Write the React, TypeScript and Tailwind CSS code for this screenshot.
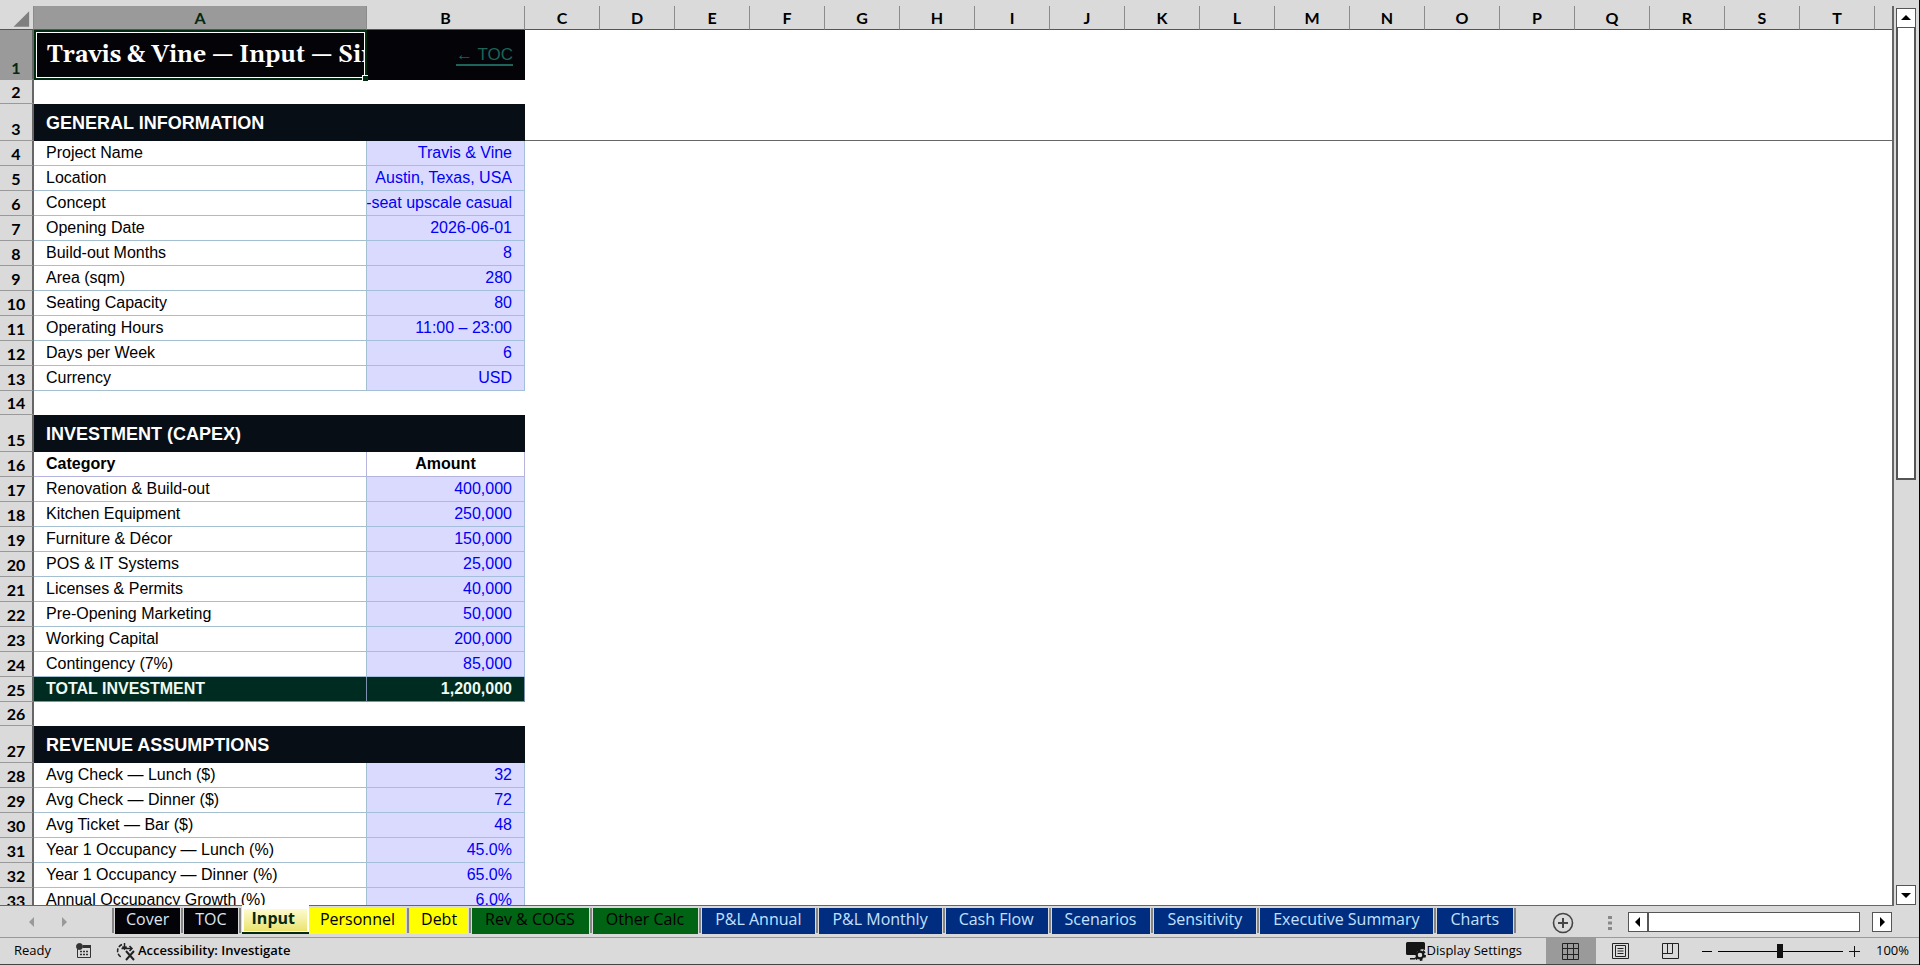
import React from "react";

type Kind = "title" | "blank" | "section" | "data" | "columns" | "total";
type Row = { kind: Kind; label?: string; value?: string };

const d = (label: string, value: string): Row => ({ kind: "data", label, value });

const rows: Row[] = [
  { kind: "title", label: "Travis & Vine — Input — Single Source of Truth", value: "← TOC" },
  { kind: "blank" },
  { kind: "section", label: "GENERAL INFORMATION" },
  d("Project Name", "Travis & Vine"),
  d("Location", "Austin, Texas, USA"),
  d("Concept", "80-seat upscale casual"),
  d("Opening Date", "2026-06-01"),
  d("Build-out Months", "8"),
  d("Area (sqm)", "280"),
  d("Seating Capacity", "80"),
  d("Operating Hours", "11:00 – 23:00"),
  d("Days per Week", "6"),
  d("Currency", "USD"),
  { kind: "blank" },
  { kind: "section", label: "INVESTMENT (CAPEX)" },
  { kind: "columns", label: "Category", value: "Amount" },
  d("Renovation & Build-out", "400,000"),
  d("Kitchen Equipment", "250,000"),
  d("Furniture & Décor", "150,000"),
  d("POS & IT Systems", "25,000"),
  d("Licenses & Permits", "40,000"),
  d("Pre-Opening Marketing", "50,000"),
  d("Working Capital", "200,000"),
  d("Contingency (7%)", "85,000"),
  { kind: "total", label: "TOTAL INVESTMENT", value: "1,200,000" },
  { kind: "blank" },
  { kind: "section", label: "REVENUE ASSUMPTIONS" },
  d("Avg Check — Lunch ($)", "32"),
  d("Avg Check — Dinner ($)", "72"),
  d("Avg Ticket — Bar ($)", "48"),
  d("Year 1 Occupancy — Lunch (%)", "45.0%"),
  d("Year 1 Occupancy — Dinner (%)", "65.0%"),
  d("Annual Occupancy Growth (%)", "6.0%"),
];

const letters = "CDEFGHIJKLMNOPQRST".split("");

const heights: Record<Kind, string> = {
  title: "h-[50px]",
  blank: "h-[24px]",
  section: "h-[37px]",
  data: "h-[25px]",
  columns: "h-[25px]",
  total: "h-[25px]",
};

const labelStyles: Record<Kind, string> = {
  title: "",
  blank: "",
  section: "",
  data: "border-b border-r border-[#a3bfd0] text-black",
  columns: "border-b border-r border-[#b4b4dc] font-bold text-black",
  total: "border-b border-r border-[#7f8fb0] bg-[#002b20] font-bold text-[#eefaf4]",
};

const valueStyles: Record<Kind, string> = {
  title: "",
  blank: "",
  section: "",
  data: "border-b border-r border-[#a3bfdb] bg-[#dadaff] text-right text-[#0000f5]",
  columns: "border-b border-r border-[#b4b4dc] text-center font-bold text-black",
  total: "border-b border-r border-[#7f8fb0] bg-[#002b20] text-right font-bold text-[#eefaf4]",
};

function RowCells({ row }: { row: Row }) {
  if (row.kind === "title") {
    return (
      <>
        <td className="bg-[#030308] p-0">
          <div className="relative flex h-[50px] items-center border-2 border-[#002b10] bg-[#030308]">
            <div className="flex h-full w-full items-center overflow-hidden border border-white pt-0.5 pl-2.5 font-['Gelasio','Georgia','Liberation_Serif',serif] text-[23px] font-bold whitespace-nowrap text-white">
              {row.label}
            </div>
            <span className="absolute -right-[3px] -bottom-[3px] size-[6px] border-t border-l border-white bg-[#002b10]" />
          </div>
        </td>
        <td className="bg-[#030308] px-3 py-0 text-right text-[17px]">
          <a href="#toc" className="text-[#1d6358] underline decoration-2 underline-offset-4">{row.value}</a>
        </td>
      </>
    );
  }
  if (row.kind === "section") {
    return (
      <td colSpan={2} className="bg-[#070e16] px-3 py-0 text-left text-lg leading-5 font-bold text-white">
        {row.label}
      </td>
    );
  }
  if (row.kind === "blank") return <td colSpan={2} className="p-0" />;
  return (
    <>
      <td className={`overflow-hidden px-3 py-0 whitespace-nowrap ${labelStyles[row.kind]}`}>{row.label}</td>
      <td className={`py-0 ${row.kind === "columns" ? "px-0" : "pr-3 pl-0"} ${valueStyles[row.kind]}`}>
        <div className={`flex overflow-hidden whitespace-nowrap ${row.kind === "columns" ? "justify-center" : "justify-end"}`}>{row.value}</div>
      </td>
    </>
  );
}

function Sheet() {
  const head = "border-r border-b border-r-[#8c8c8c] border-b-[#555] p-0 leading-5 font-bold";
  return (
    <div className="min-h-0 min-w-0 flex-1 overflow-hidden border-r-2 border-b border-[#666]">
      <table className="w-full table-fixed border-separate border-spacing-0 font-['Liberation_Sans',Arial,sans-serif] text-base leading-5">
        <colgroup>
          <col className="w-[34px]" />
          <col className="w-[333px]" />
          <col className="w-[158px]" />
          {letters.map((l) => (
            <col key={l} className="w-[75px]" />
          ))}
          <col />
        </colgroup>
        <thead className="bg-[#dadada] font-['Lato',sans-serif] text-black">
          <tr className="h-[24px]">
            <th className={head} aria-label="Select all">
              <svg viewBox="0 0 34 20" className="block h-5 w-[33px]"><path d="M30 3v16H14z" fill="#7f7f7f" /></svg>
            </th>
            <th className={`${head} bg-[#9a9a9a] text-[#06280f]`}>A</th>
            <th className={head}>B</th>
            {letters.map((l) => (
              <th key={l} className={head}>{l}</th>
            ))}
            <th className="border-b border-[#555] p-0" />
          </tr>
        </thead>
        <tbody className="bg-white">
          {rows.map((row, i) => (
            <tr key={i} className={heights[row.kind]}>
              <th
                className={`border-r-2 border-b border-r-[#666] border-b-[#999] px-0 pt-0 pb-px align-bottom font-['Lato',sans-serif] font-bold ${
                  i === 0 ? "bg-[#9a9a9a] text-[#06280f]" : "bg-[#dadada] text-black"
                }`}
              >
                {i + 1}
              </th>
              <RowCells row={row} />
              <td colSpan={19} className={`p-0 ${i === 2 ? "border-b border-[#666]" : ""}`} />
            </tr>
          ))}
        </tbody>
      </table>
    </div>
  );
}

const tabs: { name: string; style: string }[] = [
  { name: "Cover", style: "bg-[#030308] px-[11px] text-[#dfe6ee]" },
  { name: "TOC", style: "bg-[#030308] px-[11px] text-[#dfe6ee]" },
  { name: "Input", style: "" },
  { name: "Personnel", style: "bg-[#ffff00] px-[11px] font-medium text-black" },
  { name: "Debt", style: "bg-[#ffff00] px-[11px] font-medium text-black" },
  { name: "Rev & COGS", style: "bg-[#006414] pr-3.5 pl-[13px] text-black" },
  { name: "Other Calc", style: "bg-[#006414] pr-3.5 pl-[13px] text-black" },
  ...["P&L Annual", "P&L Monthly", "Cash Flow", "Scenarios", "Sensitivity", "Executive Summary", "Charts"].map((name) => ({
    name,
    style: "bg-[#002d80] pr-3.5 pl-[13px] text-[#c4e2ff]",
  })),
];

function Arrow({ dir, color = "#000" }: { dir: "up" | "down" | "left" | "right"; color?: string }) {
  const p = { up: "M1 8l5-5 5 5z", down: "M1 4l5 5 5-5z", left: "M8 1L3 6l5 5z", right: "M4 1l5 5-5 5z" }[dir];
  return (
    <svg viewBox="0 0 12 12" className="size-3">
      <path d={p} fill={color} />
    </svg>
  );
}

function Divider() {
  return <span className="mx-px h-[25px] w-0.5 bg-[#858585]" />;
}

function TabBar() {
  return (
    <div className="flex h-8 shrink-0 items-start border-b border-[#999] pr-[27px] text-base">
      <div className="flex w-[111px] shrink-0 items-center gap-5 pt-2.5 pl-[26px]">
        <button aria-label="Previous sheets" className="flex"><Arrow dir="left" color="#999" /></button>
        <button aria-label="Next sheets" className="flex"><Arrow dir="right" color="#999" /></button>
      </div>
      <nav className="flex">
        <div className="flex pt-0.5"><Divider /></div>
        {tabs.map((t) =>
          t.name === "Input" ? (
            <button key={t.name} className="-mt-px flex h-[29px] border-b-2 border-[#002b10] bg-white px-0.5 pt-1 pb-px font-bold text-[#06280f]">
              <span className="flex h-full items-center bg-linear-to-b from-[#fdfbd0] to-[#ebe36a] pr-3 pl-2 pb-1 leading-5">{t.name}</span>
            </button>
          ) : (
            <div key={t.name} className="flex pt-0.5">
              <button className={`flex h-[26px] items-center pb-1 leading-5 whitespace-nowrap ${t.style}`}>{t.name}</button>
              <Divider />
            </div>
          ),
        )}
      </nav>
      <div className="flex-1" />
      <button aria-label="New sheet" className="mt-1.5">
        <svg viewBox="0 0 22 22" className="size-[22px]" fill="none" stroke="#444">
          <circle cx="11" cy="11" r="9.5" strokeWidth="1.6" />
          <path d="M11 6v10M6 11h10" strokeWidth="2" />
        </svg>
      </button>
      <svg viewBox="0 0 4 14" className="mt-2.5 ml-[34px] h-3.5 w-1" fill="#888"><path d="M0 0h4v3H0zM0 5.500h4v3H0zM0 11h4v3H0z" /></svg>
      <div className="mt-1.5 ml-4 flex">
        <button aria-label="Scroll left" className="flex h-5 w-5 items-center justify-center border border-[#555] bg-white"><Arrow dir="left" /></button>
        <div className="h-5 w-[212px] border border-[#555] bg-white" />
        <button aria-label="Scroll right" className="ml-3 flex h-5 w-5 items-center justify-center border border-[#555] bg-white"><Arrow dir="right" /></button>
      </div>
    </div>
  );
}

function StatusBar() {
  return (
    <footer className="flex h-[27px] shrink-0 items-center border-b border-[#444] pl-3.5 text-[13px] text-black">
      <span>Ready</span>
      <svg viewBox="0 0 16 16" className="ml-[25px] size-4" fill="none" stroke="#333">
        <path d="M1.500 6v8.500h13v-12H7" />
        <path d="M7 3.500h8" strokeWidth="3" />
        <path d="M4 8.500h2M7 8.500h2M10 8.500h2M4 11.500h2M7 11.500h2M10 11.500h2" strokeWidth="1.500" />
        <circle cx="3.500" cy="3.500" r="3" fill="#333" />
      </svg>
      <button className="ml-6 flex items-center gap-0.5 font-semibold">
        <svg viewBox="0 0 20 20" className="size-5" fill="none" stroke="#222" strokeWidth="1.500">
          <path d="M6 3.500A7 7 0 0 0 6 16.500" strokeDasharray="4 1.500" />
          <path d="M8.500 2v6M5.500 7.500h10M6.500 5.500l2 2.500 2-2.500M13.500 5l2.500 2.500-2.500 2.500" />
          <path d="M10 10l8 9M18 10l-8 9" strokeWidth="2" />
        </svg>
        Accessibility: Investigate
      </button>
      <div className="flex-1" />
      <button className="flex items-center">
        <svg viewBox="0 0 20 20" className="size-5">
          <path d="M1.500 1h16a1.500 1.500 0 0 1 1.500 1.500V9a6 6 0 0 0-9 5H1.500A1.500 1.500 0 0 1 0 12.500v-10A1.500 1.500 0 0 1 1.500 1zM4 17h5v1.500H4z" fill="#151515" />
          <circle cx="14" cy="14" r="3.400" fill="none" stroke="#151515" strokeWidth="2.200" />
          <circle cx="14" cy="14" r="5" fill="none" stroke="#151515" strokeWidth="2" strokeDasharray="2.600 2.600" />
        </svg>
        Display Settings
      </button>
      <div className="ml-6 flex h-full">
        <button aria-label="Normal view" className="flex w-[50px] items-center justify-center bg-[#9a9a9a]">
          <svg viewBox="0 0 17 17" className="size-[17px]" fill="none" stroke="#222"><path d="M.5.500h16v16H.500zM5.500 0v17M11.500 0v17M0 5.500h17M0 11.500h17" /></svg>
        </button>
        <button aria-label="Page layout view" className="flex w-[50px] items-center justify-center">
          <svg viewBox="0 0 17 17" className="size-[17px]" fill="none" stroke="#222"><path d="M.5.500h16v15H.500zM3.500 2.500h10v11h-10zM5.500 5.500h6M5.500 8h6M5.500 10.500h6" /></svg>
        </button>
        <button aria-label="Page break preview" className="flex w-[50px] items-center justify-center">
          <svg viewBox="0 0 17 17" className="size-[17px]" fill="none" stroke="#222"><path d="M.5.500h16v15H.500zM.5 10.500h10V.500M5.500.500v10" /></svg>
        </button>
      </div>
      <div className="ml-1.5 flex items-center gap-1.5">
        <button aria-label="Zoom out" className="h-px w-2.5 bg-black" />
        <input
          type="range"
          aria-label="Zoom"
          defaultValue={50}
          className="h-4 w-[125px] appearance-none bg-transparent [&::-webkit-slider-runnable-track]:h-px [&::-webkit-slider-runnable-track]:bg-black [&::-webkit-slider-thumb]:-mt-[7px] [&::-webkit-slider-thumb]:h-3.5 [&::-webkit-slider-thumb]:w-1.5 [&::-webkit-slider-thumb]:appearance-none [&::-webkit-slider-thumb]:bg-[#111]"
        />
        <button aria-label="Zoom in" className="flex">
          <svg viewBox="0 0 11 11" className="size-[11px]" stroke="#111"><path d="M5.500 0v11M0 5.500h11" /></svg>
        </button>
      </div>
      <span className="mr-2.5 ml-4">100%</span>
    </footer>
  );
}

export default function App() {
  return (
    <div className="flex h-screen flex-col overflow-hidden border-r border-black bg-[#dadada] pt-1.5 font-['Open_Sans','Noto_Sans',sans-serif]">
      <main className="flex min-h-0 flex-1">
        <Sheet />
        <div className="mr-[3px] ml-0.5 flex w-5 shrink-0 flex-col pt-0.5 pb-px">
          <button aria-label="Scroll up" className="flex h-5 items-center justify-center border border-[#555] bg-white"><Arrow dir="up" /></button>
          <div className="flex-1">
            <div className="h-[52.7%] border-2 border-t-0 border-[#555] bg-white" />
          </div>
          <button aria-label="Scroll down" className="flex h-5 items-center justify-center border border-[#555] bg-white"><Arrow dir="down" /></button>
        </div>
      </main>
      <TabBar />
      <StatusBar />
    </div>
  );
}
